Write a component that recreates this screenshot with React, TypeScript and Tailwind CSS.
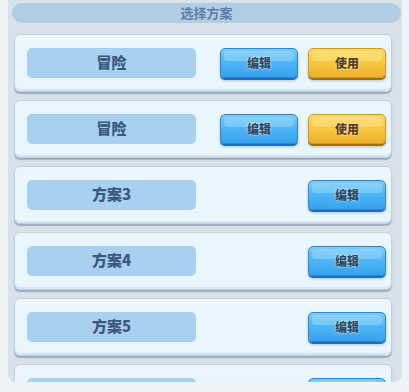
import React from "react";

const plans = [
  { name: "冒险", use: true },
  { name: "冒险", use: true },
  { name: "方案3", use: false },
  { name: "方案4", use: false },
  { name: "方案5", use: false },
  { name: "方案6", use: false },
];

const font = { fontFamily: '"Noto Sans CJK SC", "Noto Sans", sans-serif' };

function GameButton({ label, kind }: { label: string; kind: "blue" | "gold" }) {
  const blue = kind === "blue";
  return (
    <button
      className={
        "relative w-[78px] h-[30px] rounded-[5px] border text-[12px] font-black overflow-hidden " +
        (blue
          ? "border-[#2a86d2] bg-gradient-to-b from-[#7ccbf8] via-[#4cb4f5] to-[#36a2ee] text-[#2b4965] shadow-[0_2px_0_#1d6fbc,0_3px_3px_rgba(0,0,0,0.2)] [text-shadow:0_0_2px_#d5f1ff,0_0_1px_#ffffff]"
          : "border-[#d09a22] bg-gradient-to-b from-[#fcd964] via-[#f7c640] to-[#eeb02a] text-[#5a3f14] shadow-[0_2px_0_#a06e14,0_3px_3px_rgba(0,0,0,0.2)] [text-shadow:0_0_2px_#fff0b8,0_0_1px_#fff6d0]")
      }
    >
      <span
        className={
          "absolute left-[3px] right-[3px] top-[2px] h-[10px] rounded-[4px] " +
          (blue ? "bg-[#a8defb]/40" : "bg-[#ffe890]/40")
        }
      />
      <span className="relative">{label}</span>
    </button>
  );
}

export default function App() {
  return (
    <div className="w-[409px] h-[392px] bg-[#eef3f7] overflow-hidden" style={font}>
      <div className="ml-2 w-[394px] h-[382px] bg-[#d8e0e9] rounded-b-lg overflow-hidden flex flex-col">
        <div className="mt-[3px] ml-1 w-[389px] h-[21px] rounded-full bg-[#b1cde4] flex items-center justify-center text-[13px] font-bold text-[#5b7ea8]">
          选择方案
        </div>
        <div className="mt-[11px] flex flex-col gap-2">
          {plans.map((p, i) => (
            <div
              key={i}
              className="ml-[6px] w-[378px] h-[58px] shrink-0 rounded-md bg-[#eaf6fe] border border-[#c3cfdb] shadow-[inset_0_-2px_0_#d4e6f4,0_2px_1px_rgba(90,110,135,0.45)] flex items-center pl-3 pr-[5px]"
            >
              <div className="w-[169px] h-[30px] rounded-[5px] bg-[#a7d0f1] flex items-center justify-center text-[15px] font-black text-[#3a5880]">
                {p.name}
              </div>
              <div className="ml-auto flex items-center gap-[10px]">
                {p.use && <GameButton label="编辑" kind="blue" />}
                <GameButton label={p.use ? "使用" : "编辑"} kind={p.use ? "gold" : "blue"} />
              </div>
            </div>
          ))}
        </div>
      </div>
    </div>
  );
}
